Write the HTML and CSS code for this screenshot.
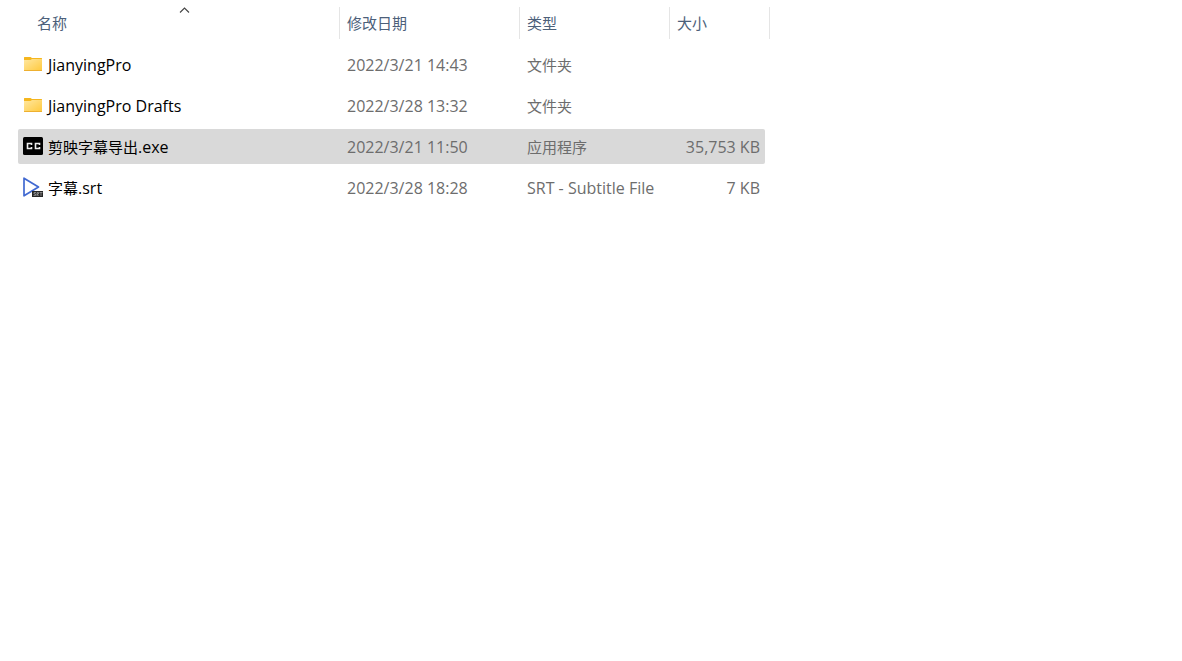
FILE: index.html
```html
<!DOCTYPE html>
<html lang="zh-CN">
<head>
<meta charset="utf-8">
<title>文件</title>
<link rel="stylesheet" href="styles.css">
</head>
<body>
<svg class="defs" aria-hidden="true">
  <defs>
    <linearGradient id="folder-fill" x1="0" y1="0" x2="1" y2="1">
      <stop offset="0" stop-color="#ffe7a0"/>
      <stop offset="1" stop-color="#ffc93c"/>
    </linearGradient>
    <symbol id="folder" viewBox="0 0 20 20">
      <path d="M1 3.500Q1 3 1.500 3H7.500L9 4H18.500Q19 4 19 4.500V8H1z" fill="#f5b61e"/>
      <path d="M1 6H7.500L9 5H19V16.500Q19 17 18.500 17H1.500Q1 17 1 16.500z" fill="url(#folder-fill)"/>
      <path d="M1 16H19V16.500Q19 17 18.500 17H1.500Q1 17 1 16.500z" fill="#eeb030"/>
    </symbol>
  </defs>
</svg>
<main class="files">
  <table class="list">
    <colgroup>
      <col class="col-name"><col class="col-date"><col class="col-type"><col class="col-size"><col class="col-end">
    </colgroup>
    <thead>
      <tr>
        <th scope="col" class="first" aria-sort="ascending">
          <button type="button" class="sort">名称</button>
          <svg class="caret" viewBox="0 0 11 6" aria-hidden="true"><path d="M1 5.500 5.500 1 10 5.500" fill="none" stroke="#444" stroke-width="1.100"/></svg>
        </th>
        <th scope="col"><button type="button" class="sort">修改日期</button></th>
        <th scope="col"><button type="button" class="sort">类型</button></th>
        <th scope="col" colspan="2"><button type="button" class="sort">大小</button></th>
      </tr>
    </thead>
    <tbody>
      <tr>
        <td><div class="name"><svg class="icon" aria-hidden="true"><use href="#folder"/></svg><span class="latin">JianyingPro</span></div></td>
        <td class="latin">2022/3/21 14:43</td>
        <td>文件夹</td>
        <td></td>
      </tr>
      <tr>
        <td><div class="name"><svg class="icon" aria-hidden="true"><use href="#folder"/></svg><span class="latin">JianyingPro Drafts</span></div></td>
        <td class="latin">2022/3/28 13:32</td>
        <td>文件夹</td>
        <td></td>
      </tr>
      <tr class="selected">
        <td><div class="name">
          <svg class="icon" viewBox="0 0 20 20" aria-hidden="true">
            <rect y="1" width="20" height="18" rx="1.500" fill="#000"/>
            <path d="M8.500 9V7.500H4.500V12.500H8.500V11M16.500 9V7.500H12.500V12.500H16.500V11" fill="none" stroke="#eee" stroke-width="1.600"/>
          </svg>
          <span>剪映字幕导出<span class="latin">.exe</span></span></div></td>
        <td class="latin">2022/3/21 11:50</td>
        <td>应用程序</td>
        <td class="latin size">35,753 KB</td>
      </tr>
      <tr>
        <td><div class="name">
          <svg class="icon" viewBox="0 0 20 20" aria-hidden="true">
            <path d="M1 1.200 15.500 10 1 18.800z" fill="#fff" stroke="#4169d1" stroke-width="1.700" stroke-linejoin="round"/>
            <rect x="9" y="14" width="11" height="6" fill="#262626"/>
            <path d="M13 15.500h-2v1.500h1.500v1.500H10.500M14 19v-3.500h1.500V17H14l1.500 2M16.500 15.500h3M18 15.500V19" fill="none" stroke="#aaa" stroke-width=".7"/>
          </svg>
          <span>字幕<span class="latin">.srt</span></span></div></td>
        <td class="latin">2022/3/28 18:28</td>
        <td class="latin">SRT - Subtitle File</td>
        <td class="latin size">7 KB</td>
      </tr>
    </tbody>
  </table>
</main>
</body>
</html>
```
FILE: styles.css
```css
body {
  margin: 0;
  background: #fff;
  color: #6d6d6d;
  font-family: "Open Sans", "Noto Sans CJK SC", sans-serif;
  font-size: 15px;
  line-height: 20px;
}

.defs {
  position: absolute;
  width: 0;
  height: 0;
}

.files {
  padding: 1px 18px;
}

.list {
  width: 752px;
  table-layout: fixed;
  border-collapse: separate;
  border-spacing: 0 6px;
}

.col-name { width: 322px; }
.col-date { width: 180px; }
.col-type { width: 150px; }
.col-size { width: 95px; }
.col-end { width: 5px; }

th {
  position: relative;
  height: 32px;
  padding: 0 0 2px;
  text-align: left;
  background: linear-gradient(#e5e5e5, #e5e5e5) right top / 1px 32px no-repeat;
}

.sort {
  display: block;
  width: 100%;
  height: 32px;
  padding: 0 7px;
  border: 0;
  background: none;
  color: #4c607a;
  font: inherit;
  font-weight: 400;
  text-align: left;
}

.first .sort {
  padding-left: 19px;
}

.caret {
  position: absolute;
  top: 0;
  left: 161px;
  width: 11px;
  height: 6px;
}

td {
  height: 35px;
  padding: 0 7px;
  white-space: nowrap;
}

td:first-child {
  padding: 0 5px;
  color: #000;
  border-radius: 2px 0 0 2px;
}

td:last-child {
  border-radius: 0 2px 2px 0;
}

.name {
  display: flex;
  align-items: center;
  gap: 5px;
}

.icon {
  flex: none;
  width: 20px;
  height: 20px;
  margin-bottom: 2px;
}

.latin {
  font-size: 16px;
}

.list .size {
  padding-right: 5px;
  text-align: right;
}

.selected td {
  background: #d9d9d9;
}
```
